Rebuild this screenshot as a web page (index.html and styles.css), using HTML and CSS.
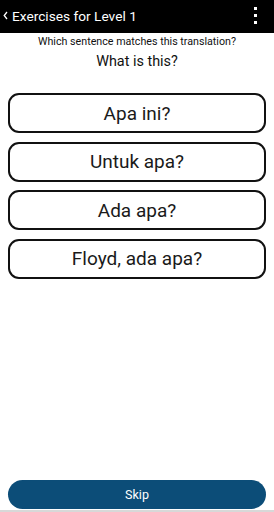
FILE: index.html
```html
<!DOCTYPE html>
<html lang="en">
<head>
    <meta charset="UTF-8">
    <meta name="viewport" content="width=device-width, initial-scale=1.0">
    <title>Exercises for Level 1</title>
    <link rel="stylesheet" href="styles.css">
</head>
<body>
    <div class="app">
        <!-- top bar -->
        <div class="top-bar">
            <div class="back">
                <svg class="chevron" width="5" height="9" viewBox="0 0 5 9">
                    <path d="M4 1 L1.2 4.5 L4 8" fill="none" stroke="#fff" stroke-width="1.3"/>
                </svg>
                <span class="title">Exercises for Level 1</span>
            </div>
            <div class="menu">
                <span class="dot"></span>
                <span class="dot"></span>
                <span class="dot"></span>
            </div>
        </div>

        <p class="prompt">Which sentence matches this translation?</p>
        <p class="phrase">What is this?</p>

        <div class="options">
            <button class="option">Apa ini?</button>
            <button class="option">Untuk apa?</button>
            <button class="option">Ada apa?</button>
            <button class="option">Floyd, ada apa?</button>
        </div>

        <button class="skip">Skip</button>
    </div>
</body>
</html>
```

FILE: styles.css
```css
* {
    box-sizing: border-box;
}

body {
    margin: 0;
    background: #fff;
    color: #111;
    font-family: Roboto, "Noto Sans", sans-serif;
}

.app {
    display: flex;
    flex-direction: column;
    height: 512px;
    border-bottom: 2px solid #d8d8d8;
}

.top-bar {
    display: flex;
    justify-content: space-between;
    align-items: center;
    height: 33px;
    background: #000;
    color: #fff;
    padding: 0 17px 0 3px;
}

.back {
    display: flex;
    align-items: center;
    gap: 4px;
    margin-top: -2px;
}

.title {
    font-size: 13.7px;
}

.menu {
    display: flex;
    flex-direction: column;
    gap: 4px;
    margin-top: -3px;
}

.dot {
    width: 3px;
    height: 3px;
    background: #fff;
}

.prompt {
    margin: 2px 0 0;
    text-align: center;
    font-size: 10.7px;
}

.phrase {
    margin: 5px 0 0;
    text-align: center;
    font-size: 14.4px;
}

.options {
    display: flex;
    flex-direction: column;
    gap: 8.5px;
    padding: 0 8px;
    margin-top: 23px;
}

.option {
    height: 40px;
    background: #fff;
    border: 2px solid #111;
    border-radius: 11px;
    font-family: Roboto, "Noto Sans", sans-serif;
    font-size: 19px;
    color: #1a1a1a;
    padding: 0;
}

.skip {
    margin: auto 8px 1px;
    height: 29px;
    background: #0c4d78;
    border: none;
    border-radius: 15px;
    color: #fff;
    font-family: Roboto, "Noto Sans", sans-serif;
    font-size: 12.5px;
    padding: 0;
}
```
